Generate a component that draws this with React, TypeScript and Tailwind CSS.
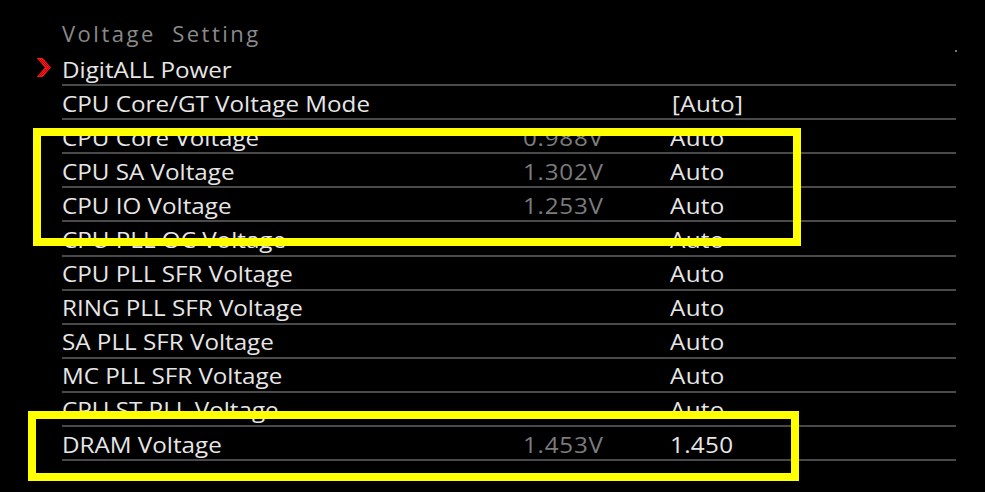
import React from 'react';

type Row = {
  label: string;
  reading?: string;
  value?: string;
  chevron?: boolean;
};

const rows: Row[] = [
  { label: 'DigitALL Power', chevron: true },
  { label: 'CPU Core/GT Voltage Mode', value: '[Auto]' },
  { label: 'CPU Core Voltage', reading: '0.988V', value: 'Auto' },
  { label: 'CPU SA Voltage', reading: '1.302V', value: 'Auto' },
  { label: 'CPU IO Voltage', reading: '1.253V', value: 'Auto' },
  { label: 'CPU PLL OC Voltage', value: 'Auto' },
  { label: 'CPU PLL SFR Voltage', value: 'Auto' },
  { label: 'RING PLL SFR Voltage', value: 'Auto' },
  { label: 'SA PLL SFR Voltage', value: 'Auto' },
  { label: 'MC PLL SFR Voltage', value: 'Auto' },
  { label: 'CPU ST PLL Voltage', value: 'Auto' },
  { label: 'DRAM Voltage', reading: '1.453V', value: '1.450' },
];

// red checkered chevron used as the selection marker
function Chevron() {
  return (
    <svg width="14" height="19" viewBox="0 0 14 19">
      <defs>
        <pattern id="chk" width="2" height="2" patternUnits="userSpaceOnUse">
          <rect width="2" height="2" fill="#b00000" />
          <rect width="1" height="1" fill="#ff2020" />
          <rect x="1" y="1" width="1" height="1" fill="#ff2020" />
        </pattern>
      </defs>
      <path d="M0.5 0.5 L5.5 0.5 L13.5 9.5 L5.5 18.5 L0.5 18.5 L8.5 9.5 Z" fill="url(#chk)" stroke="#ff1a1a" strokeWidth="1" />
    </svg>
  );
}

export default function App() {
  return (
    <div
      className="relative w-[985px] h-[492px] bg-black overflow-hidden"
      style={{ fontFamily: '"Open Sans", "Noto Sans", sans-serif' }}
    >
      {/* header */}
      <div className="pl-[62px] pt-[16px] h-[52px] text-[22px] leading-[34px] tracking-[2.5px] text-[#8a8a8a]">
        Voltage&nbsp; Setting
      </div>

      {/* settings list */}
      <div className="ml-[37px] w-[919px] flex flex-col">
        {rows.map((row) => (
          <div key={row.label} className="flex h-[34.1px]">
            <div className="w-[25px] flex items-center pb-[3px]">
              {row.chevron && <Chevron />}
            </div>
            <div className="flex-1 flex items-center pt-[1px] border-b-2 border-[#4a4a4a] text-[22px] leading-none">
              <div className="w-[461px]">
                <span className="inline-block origin-left scale-x-[1.1] text-[#e6e6e6]">{row.label}</span>
              </div>
              <div className="w-[147px]">
                <span className="inline-block origin-left scale-x-[1.1] tracking-[0.7px] text-[#7c7c7c]">
                  {row.reading}
                </span>
              </div>
              <div className={row.value === '[Auto]' ? 'pl-[2px]' : ''}>
                <span className="inline-block origin-left scale-x-[1.1] tracking-[0.3px] text-[#e6e6e6]">
                  {row.value}
                </span>
              </div>
            </div>
          </div>
        ))}
      </div>

      {/* tiny dot at the top right */}
      <div className="absolute left-[955px] top-[50px] w-[2px] h-[2px] bg-[#777]" />

      {/* highlight boxes */}
      <div className="absolute left-[33px] top-[128px] w-[768px] h-[118px] border-[8px] border-[#ffff00]" />
      <div className="absolute left-[28px] top-[411px] w-[771px] h-[70px] border-[8px] border-[#ffff00]" />
    </div>
  );
}
